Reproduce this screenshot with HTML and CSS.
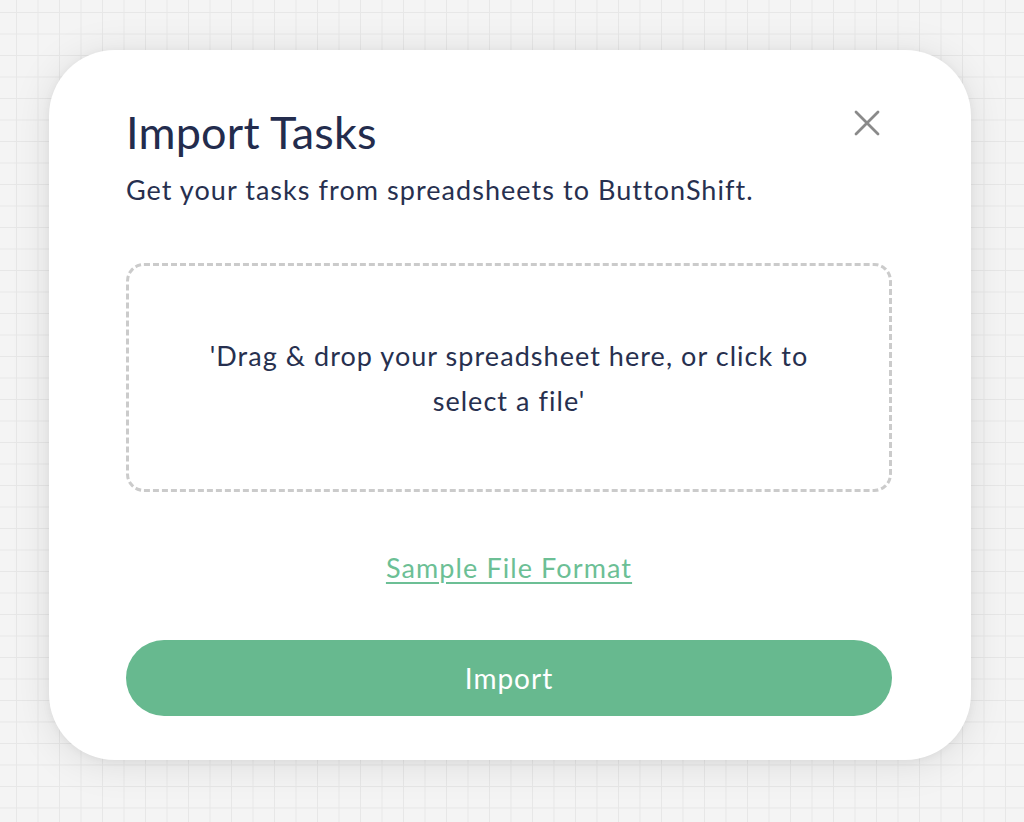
FILE: index.html
```html
<!DOCTYPE html>
<html lang="en">
<head>
<meta charset="utf-8">
<title>Import Tasks</title>
<link rel="stylesheet" href="styles.css">
</head>
<body>
<div class="page">
  <div class="modal">
    <div class="modal-head">
      <div class="head-text">
        <h1 class="title">Import Tasks</h1>
        <p class="subtitle">Get your tasks from spreadsheets to ButtonShift.</p>
      </div>
      <button class="close" aria-label="Close">
        <svg width="26" height="26" viewBox="0 0 26 26"><path d="M2 2 L24 24 M24 2 L2 24" stroke="#8a8a8a" stroke-width="2.8" stroke-linecap="round" fill="none"/></svg>
      </button>
    </div>
    <div class="dropzone">
      <p class="drop-text">'Drag &amp; drop your spreadsheet here, or click to select a file'</p>
    </div>
    <a class="sample" href="#">Sample File Format</a>
    <button class="import">Import</button>
  </div>
</div>
</body>
</html>
```
FILE: styles.css
```css
html, body {
  margin: 0;
  padding: 0;
}
body {
  width: 1024px;
  height: 822px;
  overflow: hidden;
  background-color: #f4f4f4;
  background-image:
    linear-gradient(to right, #e7e7e7 1px, transparent 1px),
    linear-gradient(to bottom, #e7e7e7 1px, transparent 1px);
  background-size: 21.5px 21.5px;
  background-position: 16px 12px;
  font-family: Lato, "Open Sans", sans-serif;
  color: #27304f;
}
.page {
  padding: 50px 0 0 49px;
}
.modal {
  box-sizing: border-box;
  width: 922px;
  height: 710px;
  background: #ffffff;
  border-radius: 66px;
  box-shadow: 0 4px 40px rgba(0, 0, 0, 0.10), 0 1px 8px rgba(0, 0, 0, 0.05);
  padding: 56px 79px 0 77px;
  display: flex;
  flex-direction: column;
}
.modal-head {
  display: flex;
  justify-content: space-between;
  align-items: flex-start;
}
.title {
  margin: 0;
  font-size: 45px;
  font-weight: 400;
  line-height: 53px;
  letter-spacing: 0.2px;
  color: #232c4d;
}
.subtitle {
  margin: 16px 0 0;
  font-size: 27px;
  line-height: 30px;
  letter-spacing: 1.05px;
  color: #27304f;
}
.close {
  border: 0;
  background: none;
  padding: 0;
  margin: 4px 12px 0 0;
  width: 26px;
  height: 26px;
  cursor: pointer;
}
.close svg {
  display: block;
}
.dropzone {
  margin-top: 58px;
  height: 229px;
  box-sizing: border-box;
  border: 3px dashed #cbcbcb;
  border-radius: 18px;
  display: flex;
  align-items: center;
  justify-content: center;
}
.drop-text {
  margin: 0;
  width: 640px;
  text-align: center;
  font-size: 27px;
  line-height: 45px;
  letter-spacing: 1.05px;
  color: #27304f;
}
.sample {
  align-self: center;
  margin-top: 58px;
  font-size: 27px;
  line-height: 36px;
  letter-spacing: 1.1px;
  color: #6cbf95;
  text-decoration: underline;
  text-decoration-thickness: 2px;
  text-underline-offset: 4px;
}
.import {
  margin-top: 54px;
  height: 76px;
  border: 0;
  border-radius: 38px;
  background: #67b98f;
  color: #ffffff;
  font-family: Lato, sans-serif;
  font-size: 28px;
  letter-spacing: 1px;
  cursor: pointer;
}
```
